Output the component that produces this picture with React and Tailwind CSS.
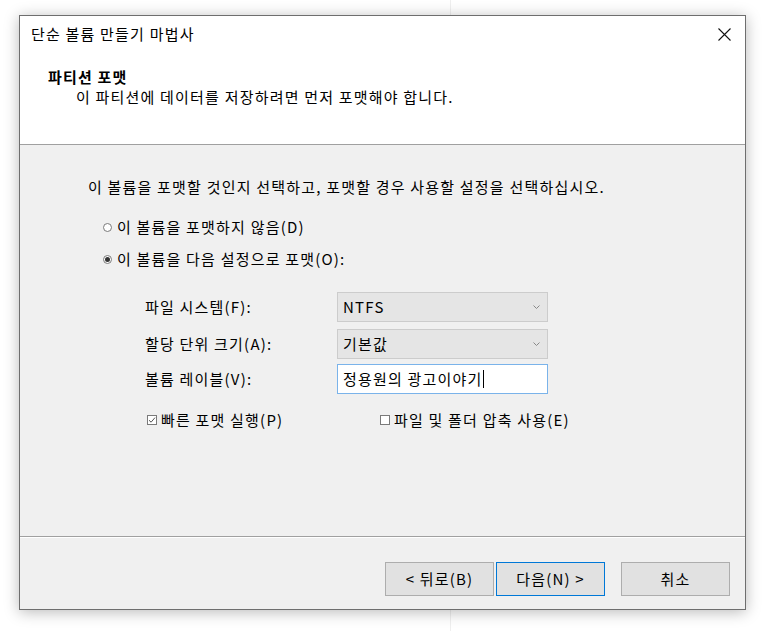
import React from 'react';

const FONT = { fontFamily: '"Noto Sans CJK KR", "Noto Sans", sans-serif' };

const Radio = ({ checked, label }) => (
    <div className="flex items-center h-5">
        <span className="w-[9px] h-[9px] rounded-full border border-[#7a7a7a] bg-white flex items-center justify-center ml-[103px] mr-[5px]">
            {checked && <span className="w-[5px] h-[5px] rounded-full bg-[#333]" />}
        </span>
        <span>{label}</span>
    </div>
);

const Check = ({ checked, label }) => (
    <div className="flex items-center h-5">
        <span className="w-[10px] h-[10px] border border-[#7a7a7a] bg-white flex items-center justify-center mr-[4px]">
            {checked && (
                <svg width="8" height="8" viewBox="0 0 8 8">
                    <path d="M1 4.2 L3.1 6.2 L7 1.6" fill="none" stroke="#555" strokeWidth="1" />
                </svg>
            )}
        </span>
        <span>{label}</span>
    </div>
);

const Combo = ({ value }) => (
    <div className="w-[211px] h-[30px] bg-[#e5e5e5] border border-[#cccccc] flex items-center justify-between pl-[5px] pr-[7px]">
        <span>{value}</span>
        <svg width="7" height="4" viewBox="0 0 7 4">
            <path d="M0.5 0.5 L3.5 3.5 L6.5 0.5" fill="none" stroke="#888" strokeWidth="1" />
        </svg>
    </div>
);

const Button = ({ children, focused }) => (
    <button
        className={
            'w-[109px] h-[34px] bg-[#e1e1e1] border flex items-center justify-center text-[15px] text-black tracking-[1.2px] ' +
            (focused ? 'border-[#0078d7]' : 'border-[#adadad]')
        }
    >
        {children}
    </button>
);

export default function App() {
    return (
        <div className="relative min-h-screen bg-white pt-[15px] pl-[19px] text-[15px] tracking-[1.2px] text-black" style={FONT}>
            <div className="absolute left-[450px] top-0 w-px h-[631px] bg-[#efefef]" />

            <div className="relative w-[727px] h-[595px] border border-[#6e6e6e] bg-[#f0f0f0] shadow-[0_2px_14px_rgba(0,0,0,0.28)] flex flex-col">
                {/* header */}
                <div className="h-[128px] bg-white">
                    <div className="flex items-center justify-between h-5 mt-[8px] pl-[11px] pr-[14px]">
                        <span>단순 볼륨 만들기 마법사</span>
                        <svg width="13" height="13" viewBox="0 0 13 13">
                            <path d="M0.5 0.5 L12.5 12.5 M12.5 0.5 L0.5 12.5" stroke="#111" strokeWidth="1.1" />
                        </svg>
                    </div>
                    <div className="pl-[28px] mt-[23px] font-bold leading-5">파티션 포맷</div>
                    <div className="pl-[56px] leading-5">이 파티션에 데이터를 저장하려면 먼저 포맷해야 합니다.</div>
                </div>
                <div className="h-px bg-[#a0a0a0]" />

                {/* body */}
                <div className="h-[391px] flex flex-col">
                    <div className="pl-[68px] mt-[32px] leading-5">
                        이 볼륨을 포맷할 것인지 선택하고, 포맷할 경우 사용할 설정을 선택하십시오.
                    </div>
                    <div className="-ml-[20px] mt-[20px]">
                        <Radio label="이 볼륨을 포맷하지 않음(D)" />
                        <div className="h-[12px]" />
                        <Radio checked label="이 볼륨을 다음 설정으로 포맷(O):" />
                    </div>

                    <div className="pl-[125px] mt-[23px] flex flex-col">
                        <div className="flex items-center">
                            <span className="w-[192px]">파일 시스템(F):</span>
                            <Combo value="NTFS" />
                        </div>
                        <div className="flex items-center mt-[7px]">
                            <span className="w-[192px]">할당 단위 크기(A):</span>
                            <Combo value="기본값" />
                        </div>
                        <div className="flex items-center mt-[5px]">
                            <span className="w-[192px]">볼륨 레이블(V):</span>
                            <div className="w-[211px] h-[30px] bg-white border border-[#7ab3ea] flex items-center pl-[5px]">
                                <span>정용원의 광고이야기</span>
                                <span className="w-px h-[18px] bg-black" />
                            </div>
                        </div>
                        <div className="flex items-center mt-[16px] pl-[2px]">
                            <div className="w-[233px]">
                                <Check checked label="빠른 포맷 실행(P)" />
                            </div>
                            <Check label="파일 및 폴더 압축 사용(E)" />
                        </div>
                    </div>
                </div>

                <div className="h-px bg-[#a0a0a0]" />
                <div className="h-px bg-white" />

                {/* footer */}
                <div className="flex-1 flex justify-end items-start pt-[24px] pr-[15px]">
                    <Button>&lt; 뒤로(B)</Button>
                    <div className="w-[2px]" />
                    <Button focused>다음(N) &gt;</Button>
                    <div className="w-[16px]" />
                    <Button>취소</Button>
                </div>
            </div>
        </div>
    );
}
